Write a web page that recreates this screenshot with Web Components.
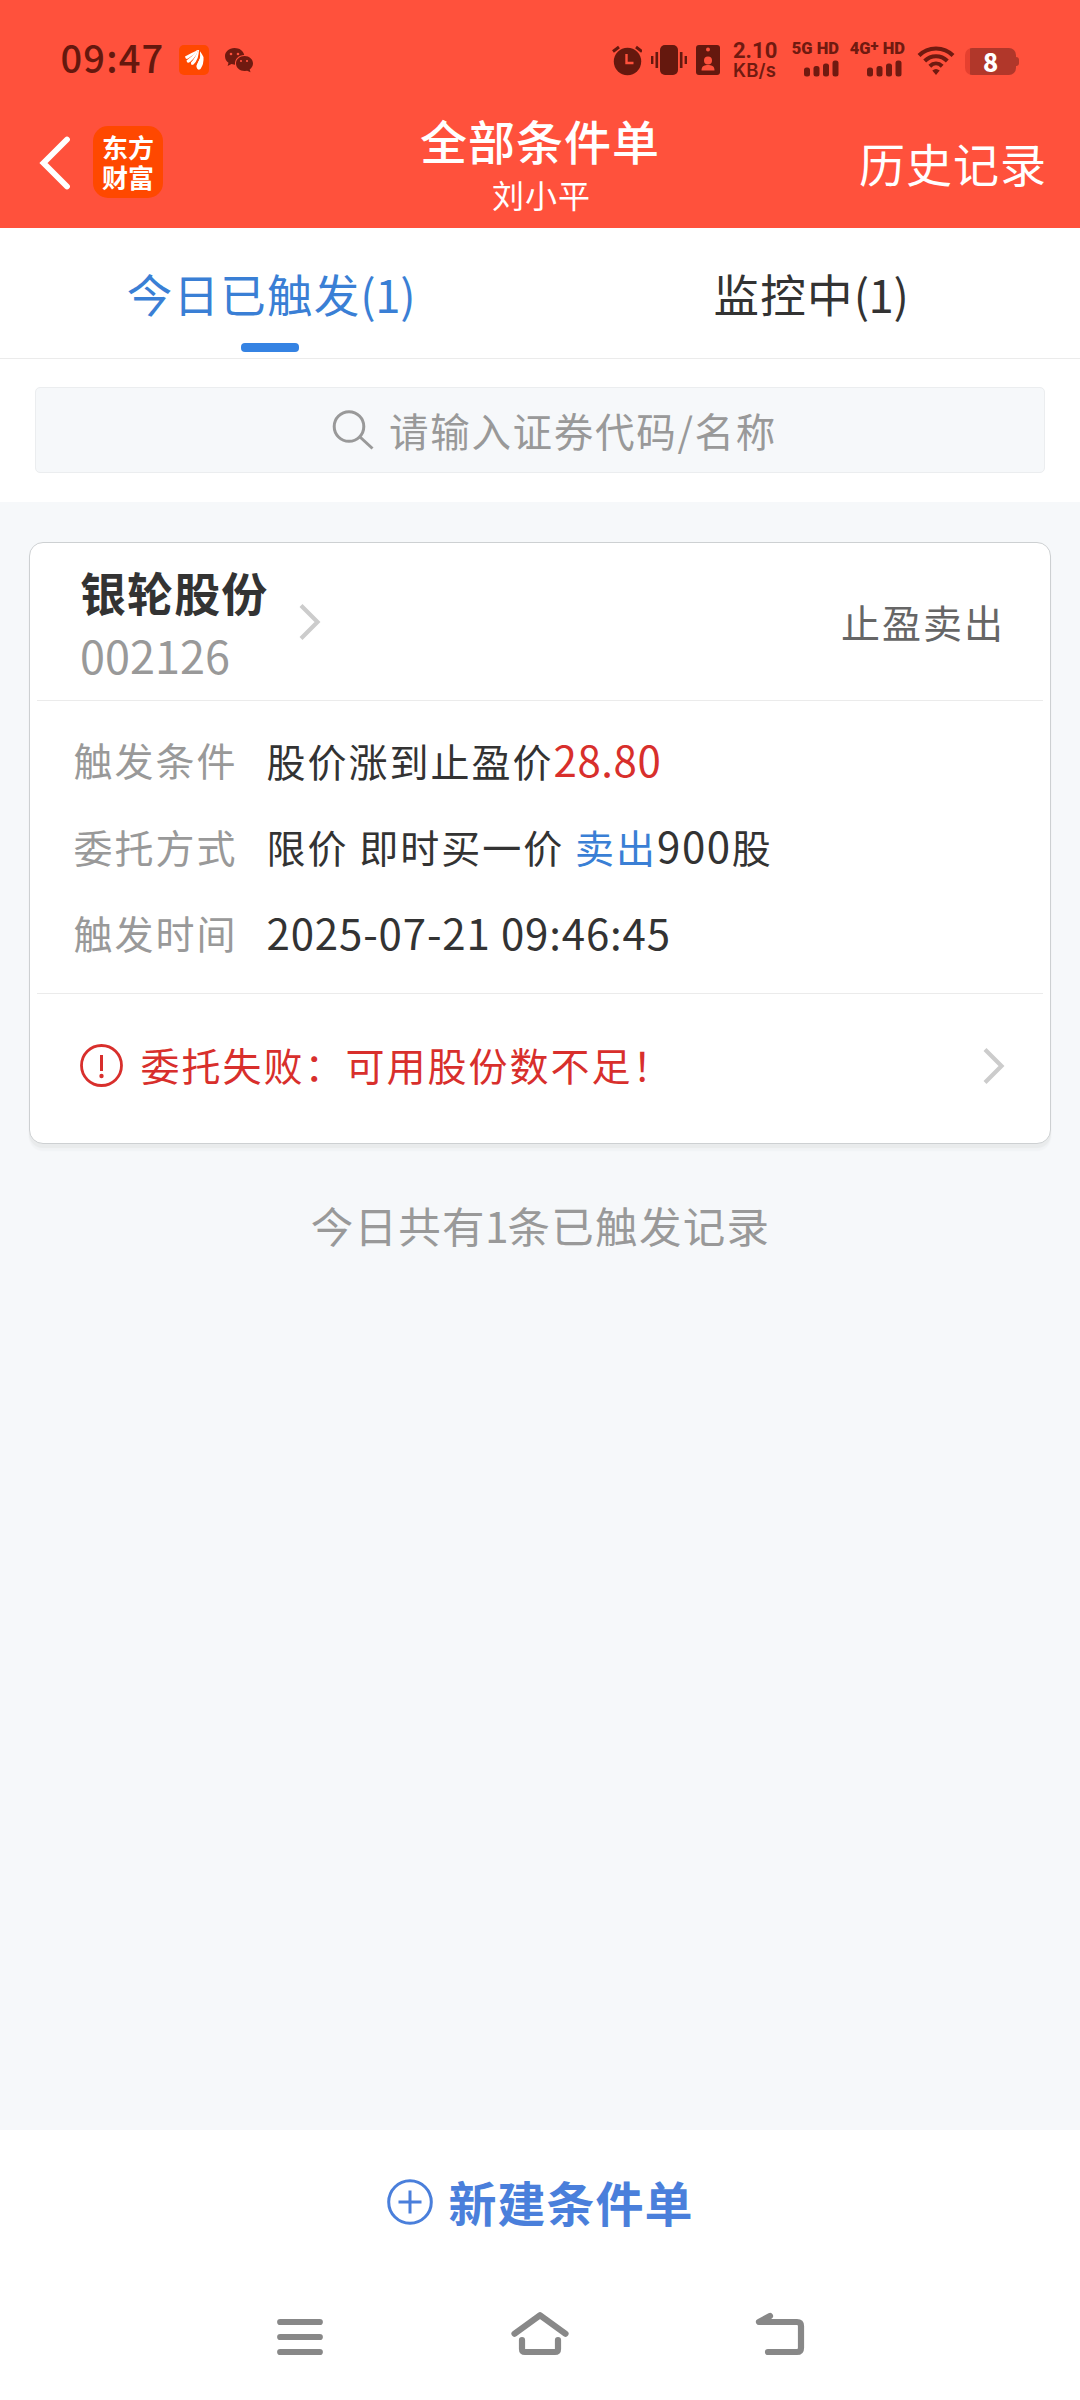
<!DOCTYPE html>
<html lang="zh-CN">
<head>
<meta charset="utf-8">
<title>全部条件单</title>
<style>
  html, body { margin: 0; padding: 0; }
  body {
    width: 1080px; height: 2400px; overflow: hidden; background: #f6f8fa;
    font-family: "Noto Sans CJK SC", "Noto Sans", sans-serif; color: #333;
  }
</style>
</head>
<body>
<order-app></order-app>
<script>
const define = (name, html) => customElements.define(name, class extends HTMLElement {
  constructor() {
    super();
    const t = document.createElement('template');
    t.innerHTML = html;
    this.attachShadow({ mode: 'open' }).appendChild(t.content.cloneNode(true));
  }
});

define('signal-meter', `
<style>
  :host { display: flex; flex-direction: column; align-items: flex-end; color: #701a10; }
  .net { font-family: Roboto, sans-serif; font-size: 16.500px; line-height: 18px; height: 18px; font-weight: 900; white-space: pre; }
  svg { display: block; margin-top: 2px; margin-right: var(--bars-gap, 0); }
</style>
<div class="net"><slot></slot></div>
<svg width="36" height="17" fill="#701a10"><rect x="1" y="7.500" width="6" height="9" rx="2.500"/><rect x="10.500" y="6" width="6" height="10.500" rx="2.500"/><rect x="20" y="3.500" width="6" height="13" rx="2.500"/><rect x="29.500" y=".5" width="6" height="16" rx="2.500"/></svg>`);

define('status-bar', `
<style>
  :host { display: flex; height: 90px; align-items: flex-start; color: #701a10; }
  svg { display: block; flex: none; }
  .time { margin: 38px 0 0 60.500px; width: 118.500px; font-size: 38px; line-height: 38px; font-weight: 500; letter-spacing: 1.2px; color: #65180e; }
  .rate { margin: 40px 0 0 13px; width: 58px; white-space: nowrap; }
  .rate b { display: block; font-family: Roboto, sans-serif; font-size: 22px; line-height: 22px; font-weight: 700; }
  .rate span { display: block; font-family: Inter, sans-serif; font-size: 18.500px; line-height: 17px; font-weight: 600; letter-spacing: .2px; }
  signal-meter { margin-top: 40px; flex: none; }
  .up { font-size: 15px; line-height: 0; vertical-align: 3px; }
  .battery { display: flex; align-items: center; margin: 48px 0 0 10px; }
  .cell { box-sizing: border-box; width: 51px; height: 27px; border-radius: 7px; background: linear-gradient(90deg, #e6402f 0 5px, #b1372a 5px); color: #fff; font-size: 25px; line-height: 26px; font-weight: 900; text-align: center; }
  .cap { width: 3px; height: 9px; background: #b1372a; border-radius: 0 3px 3px 0; }
</style>
<div class="time">09:47</div>
<svg style="margin-top:45px" width="30" height="30" viewBox="0 0 30 30"><rect width="30" height="30" rx="5" fill="#ff4800"/><g fill="#fff"><path d="M6 11.500Q12 8 18 5.500Q15 10 9 13.500Q6.500 15 6 11.500Z"/><path d="M19 5Q18 11 11 17Q8 19 7.500 15.500Q14 11 18 5Z"/><path d="M20 5Q20 14 14.500 19.500Q11.500 21 12 17.500Q17 12 19 5Z"/><path d="M20.500 5.500Q23 9 24.500 12Q25 19 21.500 24Q18.500 26 17.500 22Q17 20 20 15Q22 11 20.500 5.500Z"/></g><path d="M20.500 6Q21.500 13 17 20" stroke="#ff4800" stroke-width="1" fill="none"/></svg>
<svg style="margin:47px 0 0 15px" width="30" height="27" viewBox="0 0 30 27"><path fill="#701a10" d="M10.500 1C4.900 1 1 4.700 1 9.300c0 2.700 1.300 5 3.500 6.500L3.600 19l3.900-1.900 3.500.6c-.5-6 3.800-9.500 9.200-9.700C19.500 3.800 15.400 1 10.500 1Z"/><path fill="#701a10" d="M20.600 9c-4.900 0-8.600 3.300-8.600 7.600s3.700 7.500 8.600 7.500l2.600-.4 3.300 1.600-.8-2.800c2-1.400 3.300-3.500 3.300-5.900 0-4.300-3.700-7.600-8.400-7.600Z"/><g fill="#ff513c"><circle cx="7" cy="7" r="1.300"/><circle cx="14" cy="7" r="1.300"/><circle cx="17" cy="14" r="1.100"/><circle cx="23" cy="14" r="1.100"/></g></svg>
<svg style="margin:45px 0 0 358px" width="30" height="31" viewBox="0 0 30 31"><circle cx="15.500" cy="16.500" r="13.700" fill="#65180e"/><path d="M1 6.500 7 2M24 2l6 4.500" stroke="#65180e" stroke-width="3" fill="none"/><path d="M14.500 9v9h7" stroke="#ff513c" stroke-width="2.400" fill="none"/></svg>
<svg style="margin:45px 0 0 9px" width="36" height="30" viewBox="0 0 36 30" fill="#65180e"><rect x="9" width="18" height="30" rx="5"/><rect x="4.500" y="7" width="2.600" height="16"/><rect x="0" y="11" width="2.400" height="8"/><rect x="28.900" y="7" width="2.600" height="16"/><rect x="33.600" y="11" width="2.400" height="8"/></svg>
<svg style="margin:45px 0 0 9px" width="24" height="30" viewBox="0 0 24 30"><rect width="24" height="30" rx="3" fill="#65180e"/><g fill="#ff513c"><circle cx="12" cy="4.500" r="2"/><circle cx="12" cy="15.500" r="4"/><path d="M5.500 25.500c0-5 3.500-5.500 6.500-5.500s6.500.5 6.500 5.500Z"/></g></svg>
<div class="rate"><b>2.10</b><span>KB/s</span></div>
<signal-meter style="width:48px">5G HD</signal-meter>
<signal-meter style="width:57px;margin-left:9px;--bars-gap:3px">4G<span class="up">+</span> HD</signal-meter>
<svg style="margin:45px 0 0 12px" width="38" height="31" viewBox="0 0 38 31" fill="none" stroke="#701a10" stroke-width="4"><path d="M2 10.500C11 1 27 1 36 10.500"/><path d="M7.700 16C14 9.500 24 9.500 30.300 16"/><path d="M12.800 21.200C16.500 17.600 21.500 17.600 25.200 21.200"/><path d="M15.300 25.600Q19 22.500 22.700 25.600L19 30Z" fill="#701a10" stroke="none"/></svg>
<div class="battery"><div class="cell">8</div><div class="cap"></div></div>`);

define('title-bar', `
<style>
  :host { display: grid; grid-template-columns: 1fr 300px 1fr; height: 138px; color: #fff; }
  .left { display: flex; align-items: flex-start; }
  svg { margin: 45px 0 0 38px; }
  .logo { box-sizing: border-box; margin: 36px 0 0 22px; width: 70px; height: 72px; padding: 8px 0 0 9px; border-radius: 15px; background: #ff4800; font-family: "Liberation Sans", "Noto Sans CJK SC", sans-serif; font-size: 26px; font-weight: 700; }
  .logo div { height: 30px; line-height: 30px; }
  .mid { text-align: center; }
  h1 { margin: 22px 0 0; font-size: 47px; line-height: 56px; font-weight: 500; letter-spacing: 1px; white-space: nowrap; }
  .sub { margin-left: 3px; font-size: 32px; line-height: 52px; letter-spacing: 1px; }
  .right { margin: 44px 33px 0 0; text-align: right; font-size: 46px; line-height: 56px; letter-spacing: 1px; }
</style>
<div class="left">
  <svg width="33" height="56" viewBox="0 0 33 56"><path d="M29 4.500 5.500 28 29 51.500" stroke="#fff" stroke-width="5.800" fill="none" stroke-linecap="round"/></svg>
  <div class="logo"><div>东方</div><div>财富</div></div>
</div>
<div class="mid"><h1>全部条件单</h1><div class="sub">刘小平</div></div>
<div class="right">历史记录</div>`);

define('tab-item', `
<style>
  :host { display: flex; flex: 1; flex-direction: column; align-items: center; font-size: 45.500px; letter-spacing: 1.2px; color: #333; }
  .label { margin: 36px 0 0 2px; line-height: 58px; height: 58px; }
  .mark { margin-top: 21px; width: 58px; height: 9px; border-radius: 4px; }
  :host([active]) { color: #3a7fd5; }
  :host([active]) .mark { background: #3583e3; }
</style>
<div class="label"><slot></slot></div><div class="mark"></div>`);

define('tab-strip', `
<style>:host { display: flex; box-sizing: border-box; height: 131px; background: #fff; border-bottom: 1px solid #ebebeb; }</style>
<slot></slot>`);

define('search-box', `
<style>
  :host { display: block; box-sizing: border-box; height: 143px; padding: 28px 35px 0; background: #fff; }
  .box { display: flex; align-items: center; box-sizing: border-box; height: 86px; padding-left: 296px; border: 1px solid #ebedef; border-radius: 5px; background: #f6f8fa; color: #999; }
  span { margin: -1px 0 0 15px; font-size: 39.500px; letter-spacing: 1.700px; line-height: 60px; white-space: nowrap; }
</style>
<div class="box">
  <svg width="42" height="40" viewBox="0 0 42 40" fill="none" stroke="#999" stroke-width="3"><circle cx="17" cy="16.500" r="14.800"/><path d="M28 27 40.500 38.500"/></svg>
  <span>请输入证券代码/名称</span>
</div>`);

define('chevron-right', `
<style>:host { display: block; flex: none; } svg { display: block; }</style>
<svg width="22" height="38" viewBox="0 0 22 38"><path d="M2 2.500 18.500 19 2 35.500" fill="none" stroke="#ccc" stroke-width="4.200"/></svg>`);

define('field-row', `
<style>
  :host { display: flex; height: 86.500px; align-items: center; font-size: 39px; letter-spacing: 2px; line-height: 60px; white-space: nowrap; }
  .label { width: 193px; color: #999; }
</style>
<div class="label"><slot name="label"></slot></div><div><slot></slot></div>`);

define('order-card', `
<style>
  :host { display: block; box-sizing: border-box; margin: 40px 29px 0; height: 602px; padding: 0 7px; border: 1px solid #cdd0d2; border-radius: 14px; background: #fff; box-shadow: 0 4px 1px #e9ebec, 0 7px 1px #f1f3f5; }
  .head { display: flex; align-items: flex-start; box-sizing: border-box; height: 158px; padding: 0 38px 0 43px; border-bottom: 1px solid #ebebeb; }
  .id { width: 219px; }
  .name { margin-top: 20px; font-size: 46px; line-height: 56px; font-weight: 700; letter-spacing: 1.100px; }
  .code { margin-top: 11px; font-size: 45px; line-height: 50px; color: #999; }
  .kind { margin: 48px 0 0 auto; font-size: 39px; letter-spacing: 2px; line-height: 60px; color: #666; }
  .rows { box-sizing: border-box; height: 293px; padding: 15px 0 0 36.500px; border-bottom: 1px solid #ebebeb; }
  .alert { display: flex; align-items: flex-start; padding: 50px 38px 0 42.500px; color: #d82f2c; }
  .alert span { margin: -10px 0 0 18px; font-size: 39px; line-height: 60px; letter-spacing: 2px; white-space: nowrap; }
</style>
<div class="head">
  <div class="id"><div class="name"><slot name="name"></slot></div><div class="code"><slot name="code"></slot></div></div>
  <chevron-right style="margin-top:60px"></chevron-right>
  <div class="kind"><slot name="kind"></slot></div>
</div>
<div class="rows"><slot></slot></div>
<div class="alert">
  <svg width="43" height="43" viewBox="0 0 43 43"><circle cx="21.500" cy="21.500" r="20" fill="none" stroke="#d82f2c" stroke-width="2.800"/><path d="M21.500 11v16" stroke="#d82f2c" stroke-width="3"/><circle cx="21.500" cy="32" r="2.200" fill="#d82f2c"/></svg>
  <span><slot name="alert"></slot></span>
  <chevron-right style="margin:3px 0 0 auto"></chevron-right>
</div>`);

define('create-bar', `
<style>
  :host { display: flex; align-items: flex-start; justify-content: center; box-sizing: border-box; height: 160px; padding: 49px 0 0 1px; background: #fff; color: #4a7fdb; }
  span { margin: -8px 0 0 15px; font-size: 48px; line-height: 60px; font-weight: 700; letter-spacing: 1px; }
</style>
<svg width="46" height="46" viewBox="0 0 46 46" fill="none" stroke="#4a7fdb" stroke-width="3"><circle cx="23" cy="23" r="21.300"/><path d="M11.500 23h23M23 11.500v23"/></svg>
<span><slot></slot></span>`);

define('nav-bar', `
<style>
  :host { display: flex; justify-content: space-between; box-sizing: border-box; height: 110px; padding: 20px 270px 0 270px; background: #fff; }
</style>
<svg width="60" height="50" viewBox="0 0 60 50" stroke="#888" stroke-width="6.200" stroke-linecap="round"><path d="M10.200 12h39.600M10.200 27h39.600M10.200 42h39.600"/></svg>
<svg width="60" height="50" viewBox="0 0 60 50" fill="none" stroke="#888" stroke-width="6.200" stroke-linecap="round" stroke-linejoin="round"><path d="M4.500 23.700 30 5.200 55.500 23.700"/><path d="M12 30v9q0 3 3 3h30q3 0 3-3v-9"/></svg>
<svg width="60" height="50" viewBox="0 0 60 50" fill="none" stroke="#888" stroke-width="6.200" stroke-linecap="round" stroke-linejoin="round"><path d="M20 6 9 12h38q4 0 4 4v22q0 4-4 4H18"/></svg>`);

define('order-app', `
<style>
  :host { display: flex; flex-direction: column; width: 1080px; height: 2400px; background: #f6f8fa; }
  header { background: #ff513c; height: 228px; flex: none; }
  main { flex: 1; }
  .red { color: #d82f2c; font-size: 42px; letter-spacing: .6px; }
  .blue { color: #3a7fd5; }
  .num { font-size: 42px; letter-spacing: .85px; }
  .wide { letter-spacing: 1.600px; }
  .count { letter-spacing: -.4px; }
  .total { margin: 51px 0 0 1px; text-align: center; font-size: 42.500px; line-height: 60px; letter-spacing: 1.300px; color: #999; }
  .one { letter-spacing: -1px; margin-left: -1px; }
</style>
<header><status-bar></status-bar><title-bar></title-bar></header>
<main>
  <tab-strip><tab-item active>今日已触发<span class="count">(1)</span></tab-item><tab-item>监控中<span class="count">(1)</span></tab-item></tab-strip>
  <search-box></search-box>
  <order-card>
    <span slot="name">银轮股份</span><span slot="code">002126</span><span slot="kind">止盈卖出</span>
    <field-row><span slot="label">触发条件</span>股价涨到止盈价<span class="red">28.80</span></field-row>
    <field-row><span slot="label">委托方式</span>限价 即时买一价 <span class="blue">卖出</span><span class="num wide">900</span>股</field-row>
    <field-row><span slot="label">触发时间</span><span class="num">2025-07-21 09:46:45</span></field-row>
    <span slot="alert">委托失败：可用股份数不足！</span>
  </order-card>
  <div class="total">今日共有<span class="one">1</span>条已触发记录</div>
</main>
<create-bar>新建条件单</create-bar>
<nav-bar></nav-bar>`);
</script>
</body>
</html>
